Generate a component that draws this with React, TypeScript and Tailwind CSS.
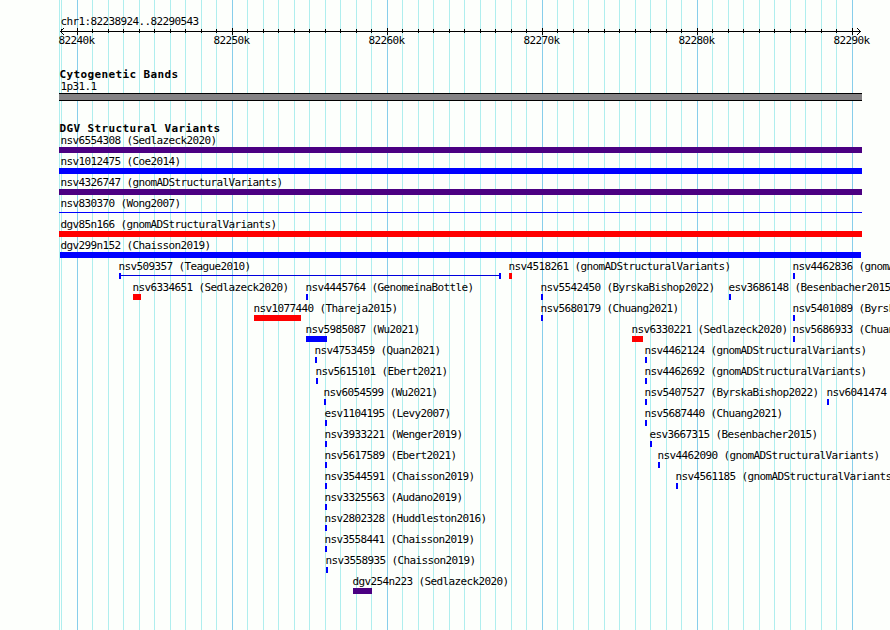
import React from "react";

type Feature = {
  name: string;
  x: number;
  w: number;
  color: string;
  kind?: "line" | "range";
  labelX?: number;
};

const BLUE = "bg-[#0000ff]";
const RED = "bg-[#ff0000]";
const INDIGO = "bg-[#4b0082]";

const f = (name: string, x: number, w = 2, color = BLUE): Feature => ({ name, x, w, color });
const wide = (name: string, color: string, kind?: "line", x = 59, w = 803): Feature => ({
  name,
  x,
  w,
  color,
  kind,
  labelX: 60.5,
});

const rows: Feature[][] = [
  [wide("nsv6554308 (Sedlazeck2020)", INDIGO)],
  [wide("nsv1012475 (Coe2014)", BLUE)],
  [wide("nsv4326747 (gnomADStructuralVariants)", INDIGO)],
  [wide("nsv830370 (Wong2007)", BLUE, "line")],
  [wide("dgv85n166 (gnomADStructuralVariants)", RED)],
  [wide("dgv299n152 (Chaisson2019)", BLUE, undefined, 60, 801)],
  [
    { name: "nsv509357 (Teague2010)", x: 119, w: 382, color: BLUE, kind: "range" },
    f("nsv4518261 (gnomADStructuralVariants)", 509, 3, RED),
    f("nsv4462836 (gnomADStructuralVariants)", 793),
  ],
  [
    f("nsv6334651 (Sedlazeck2020)", 133, 8, RED),
    f("nsv4445764 (GenomeinaBottle)", 306),
    f("nsv5542450 (ByrskaBishop2022)", 541),
    f("esv3686148 (Besenbacher2015)", 729),
  ],
  [
    f("nsv1077440 (Thareja2015)", 254, 47, RED),
    f("nsv5680179 (Chuang2021)", 541),
    f("nsv5401089 (ByrskaBishop2022)", 793),
  ],
  [
    f("nsv5985087 (Wu2021)", 306, 21),
    f("nsv6330221 (Sedlazeck2020)", 632, 11, RED),
    f("nsv5686933 (Chuang2021)", 793),
  ],
  [f("nsv4753459 (Quan2021)", 315), f("nsv4462124 (gnomADStructuralVariants)", 645)],
  [f("nsv5615101 (Ebert2021)", 316), f("nsv4462692 (gnomADStructuralVariants)", 645)],
  [
    f("nsv6054599 (Wu2021)", 324),
    f("nsv5407527 (ByrskaBishop2022)", 645),
    f("nsv6041474", 827),
  ],
  [f("esv1104195 (Levy2007)", 325), f("nsv5687440 (Chuang2021)", 645)],
  [f("nsv3933221 (Wenger2019)", 325), f("esv3667315 (Besenbacher2015)", 650)],
  [f("nsv5617589 (Ebert2021)", 325), f("nsv4462090 (gnomADStructuralVariants)", 658)],
  [f("nsv3544591 (Chaisson2019)", 325), f("nsv4561185 (gnomADStructuralVariants)", 676)],
  [f("nsv3325563 (Audano2019)", 325)],
  [f("nsv2802328 (Huddleston2016)", 325)],
  [f("nsv3558441 (Chaisson2019)", 325)],
  [f("nsv3558935 (Chaisson2019)", 326)],
  [f("dgv254n223 (Sedlazeck2020)", 353, 19, INDIGO)],
];

// One tick per kilobase, from 82239k to 82290k.
const ticks = Array.from({ length: 52 }, (_, i) => ({
  x: 77 + Math.floor((i - 1) * 15.5),
  major: (i - 1) % 10 === 0,
  kb: 82239 + i,
}));

function GridLines() {
  return (
    <svg className="absolute inset-0" width="890" height="630" shapeRendering="crispEdges">
      <rect x={59} y={0} width={1} height={630} fill="#afeeee" />
      {ticks.map((t) => (
        <rect key={t.x} x={t.x} y={0} width={1} height={630} fill={t.major ? "#87ceeb" : "#afeeee"} />
      ))}
    </svg>
  );
}

function Ruler() {
  return (
    <svg className="block" width="890" height="7" shapeRendering="crispEdges">
      <rect x={60} y={3} width={801} height={1} />
      {ticks.map((t) => (
        <rect key={t.x} x={t.x} y={t.major ? 0 : 1} width={1} height={t.major ? 7 : 4} />
      ))}
      {[1, 2, 3].map((d) => (
        <g key={d}>
          <rect x={60 + d} y={3 - d} width={1} height={1} />
          <rect x={60 + d} y={3 + d} width={1} height={1} />
          <rect x={860 - d} y={3 - d} width={1} height={1} />
          <rect x={860 - d} y={3 + d} width={1} height={1} />
        </g>
      ))}
    </svg>
  );
}

function Glyph({ feature }: { feature: Feature }) {
  if (feature.kind === "line") {
    return <div className="h-px mt-[2px] bg-[#0000ff]" style={{ width: feature.w }} />;
  }
  if (feature.kind === "range") {
    return (
      <div className="flex h-[6px]" style={{ width: feature.w }}>
        <div className="w-[2px] bg-[#0000ff]" />
        <div className="mt-[2px] h-px flex-1 bg-[#0000dd]" />
        <div className="w-[2px] bg-[#0000ff]" />
      </div>
    );
  }
  return <div className={`h-[6px] ${feature.color}`} style={{ width: feature.w }} />;
}

function FeatureItem({ feature }: { feature: Feature }) {
  const shift = (feature.labelX ?? feature.x - 0.5) - feature.x;
  return (
    <div className="absolute top-0" style={{ left: feature.x }}>
      <div className="h-[14px] w-0 leading-[16px]" style={{ marginLeft: shift }}>
        {feature.name}
      </div>
      <Glyph feature={feature} />
    </div>
  );
}

function Heading({ children }: { children: React.ReactNode }) {
  return (
    <h2 className="h-[12px] pl-[59.5px] text-[11px] font-bold leading-[16px] tracking-[0.378px]">{children}</h2>
  );
}

export default function App() {
  return (
    <div className="relative h-[630px] w-[890px] overflow-hidden whitespace-pre bg-[#fdfffc] font-['DejaVu_Sans_Mono','Liberation_Mono',monospace] text-[11px] tracking-[-0.622px] text-black">
      <GridLines />
      <main className="relative flex flex-col">
        <div className="h-[14px] mt-[14px] pl-[60.5px] leading-[16px]">chr1:82238924..82290543</div>
        <Ruler />
        <div className="relative -mt-[2px] h-[34px]">
          {ticks
            .filter((t) => t.major)
            .map((t) => (
              <span key={t.kb} className="absolute top-0 leading-[16px]" style={{ left: t.x - 18.5 }}>
                {t.kb}k
              </span>
            ))}
        </div>
        <Heading>Cytogenetic Bands</Heading>
        <div className="h-[14px] pl-[60.5px] leading-[16px]">1p31.1</div>
        <div className="ml-[59px] h-[8px] w-[803px] border-y border-black bg-[#848284]" />
        <div className="h-[20px]" />
        <Heading>DGV Structural Variants</Heading>
        <div className="flex flex-col">
          {rows.map((row, i) => (
            <div key={i} className="relative h-[21px]">
              {row.map((feature) => (
                <FeatureItem key={feature.name} feature={feature} />
              ))}
            </div>
          ))}
        </div>
      </main>
    </div>
  );
}
